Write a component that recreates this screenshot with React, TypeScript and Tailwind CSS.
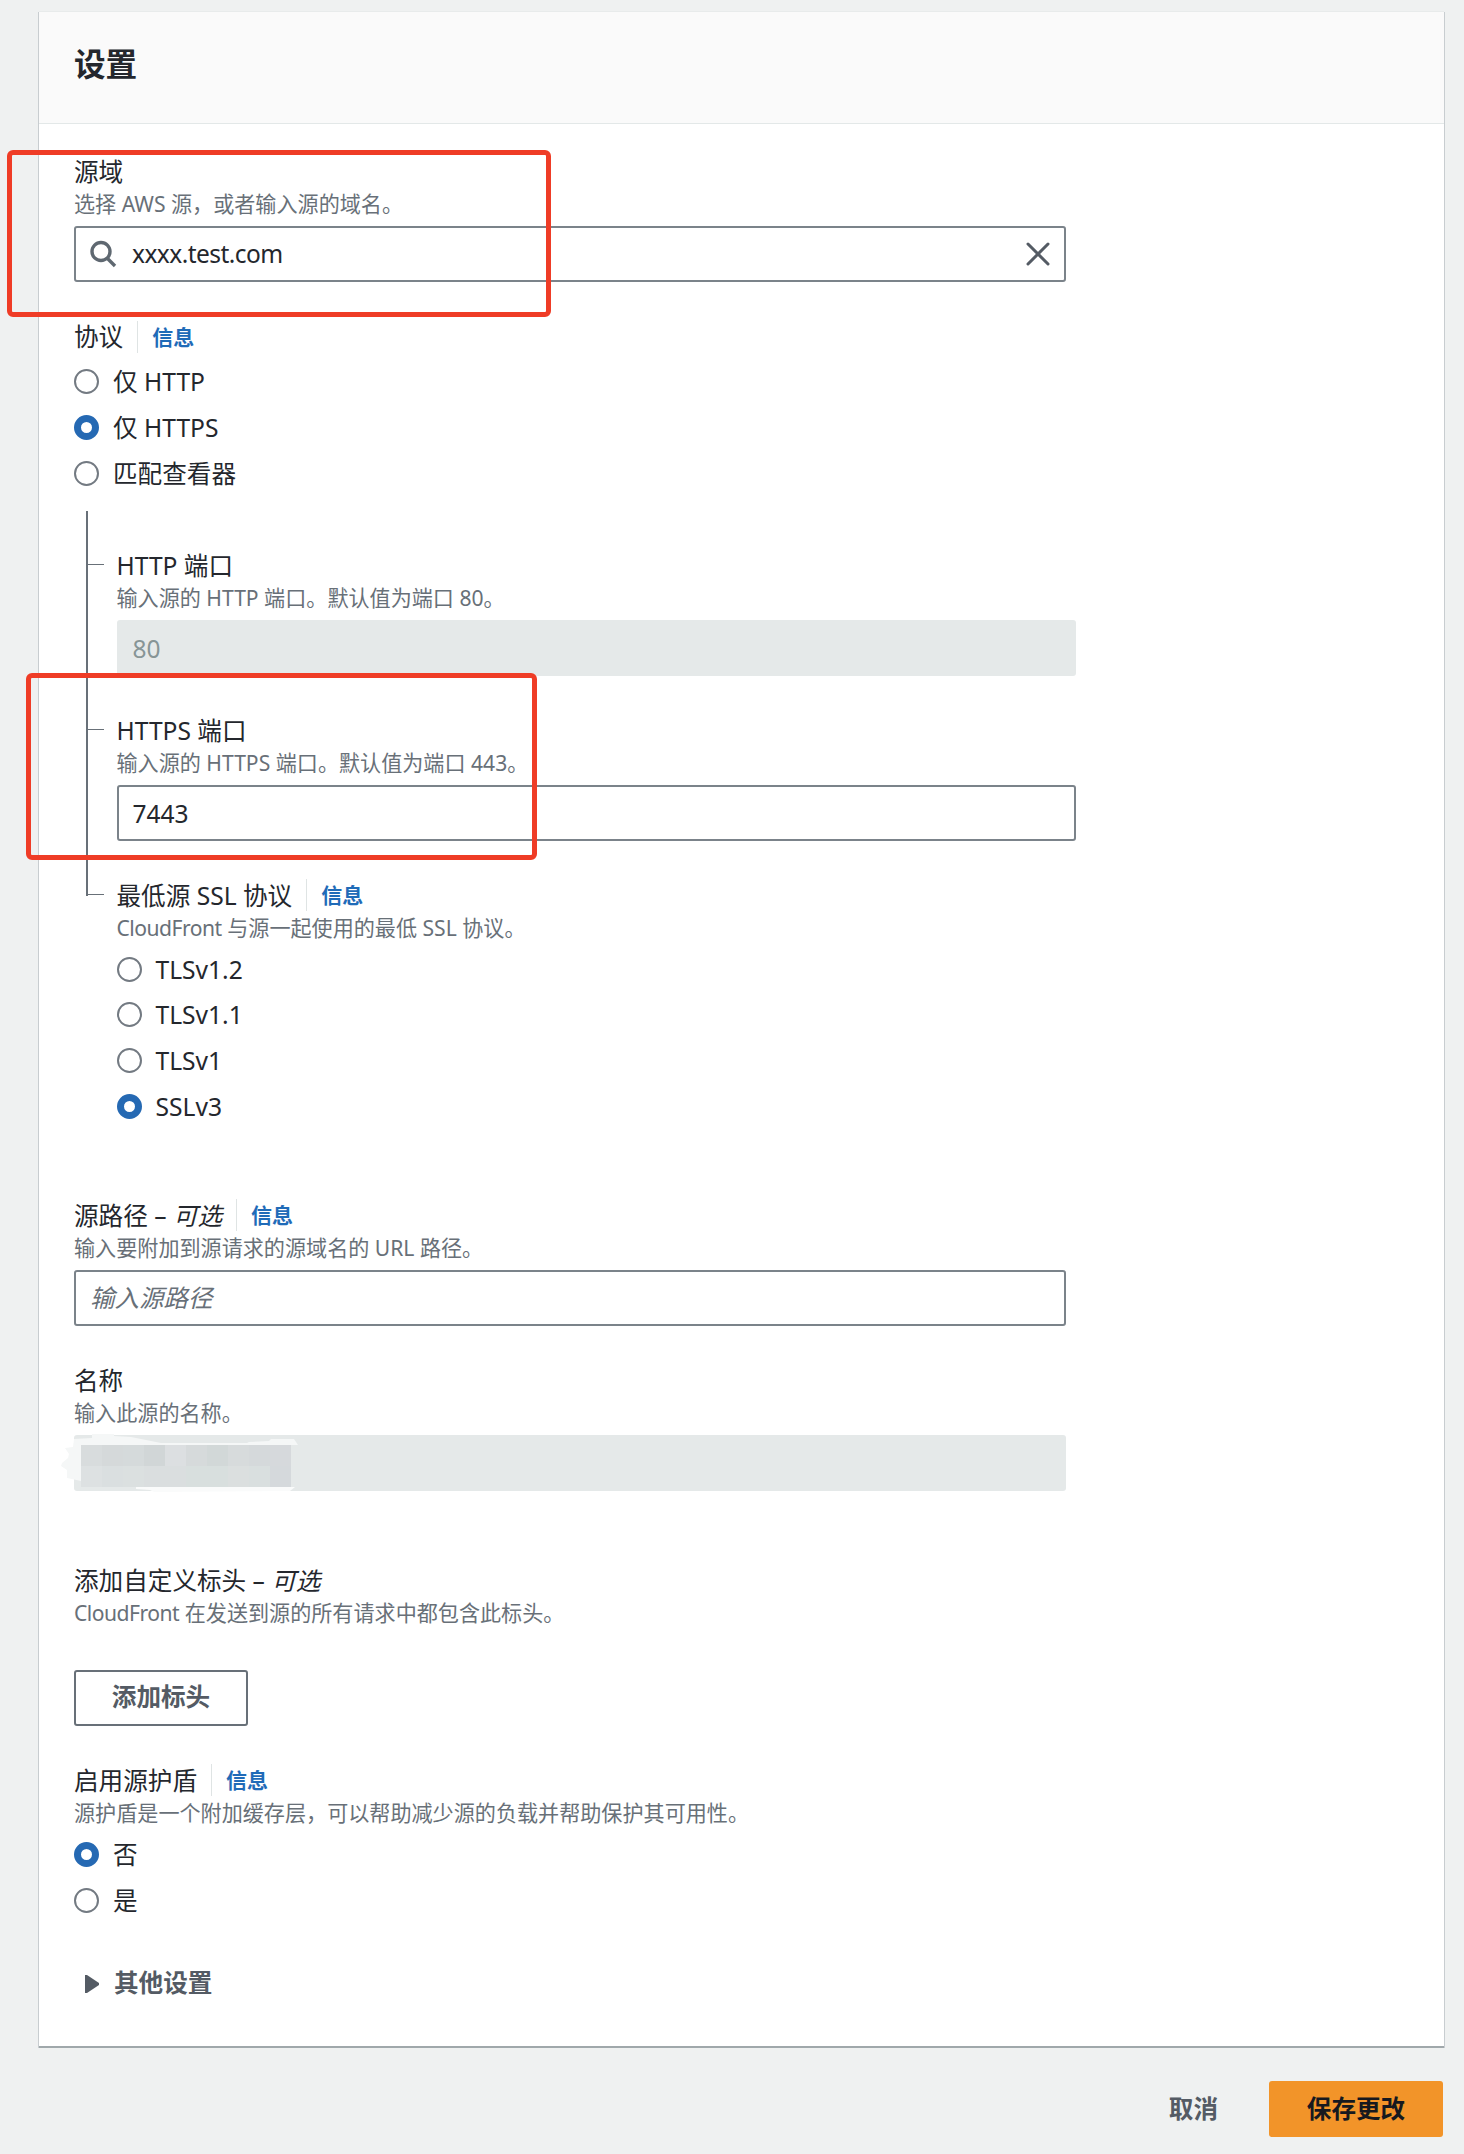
import type { ReactNode } from "react";

const LINK = "text-[21px] font-bold text-[#1f6bb8]";

function Label({ children, info }: { children: ReactNode; info?: boolean }) {
    return (
        <div className="flex h-[33px] items-center text-[24.6px] leading-[33px] whitespace-pre text-[#24272d]">
            <span>{children}</span>
            {info && (
                <a className={`ml-3.5 h-8 border-l border-[#dfe4e4] pl-3.5 leading-8 ${LINK}`}>信息</a>
            )}
        </div>
    );
}

function Hint({ children }: { children: ReactNode }) {
    return <p className="h-8 text-[21.1px] leading-8 whitespace-nowrap text-[#687078]">{children}</p>;
}

function Radio({ label, checked }: { label: string; checked?: boolean }) {
    return (
        <label className="flex h-[45.7px] items-center gap-3.5 text-[24.6px] text-[#24272d]">
            <span
                className={
                    checked
                        ? "size-[25px] rounded-full border-[7.5px] border-[#2569b3] bg-white"
                        : "size-[25px] rounded-full border-2 border-[#737a82] bg-white"
                }
            />
            <span className="leading-[33px]">{label}</span>
        </label>
    );
}

function Box({ children, disabled }: { children?: ReactNode; disabled?: boolean }) {
    return (
        <div
            className={
                disabled
                    ? "mt-1.5 flex h-14 items-center rounded-[3px] bg-[#e5e9e9] px-4 pt-0.5 text-[24.5px] text-[#879596]"
                    : "mt-1.5 flex h-14 items-center rounded-[3px] border-2 border-[#7b838a] bg-white px-3.5 text-[24.5px] text-[#24272d]"
            }
        >
            {children}
        </div>
    );
}

// Tick that joins a nested field to the vertical line
function Tick() {
    return <span className="absolute top-[15px] -left-[29px] h-[1.5px] w-4 bg-[#687078]" />;
}

const MOSAIC_TOP = ["#d8dcdd", "#d5d9da", "#d5dadb", "#d1d6d7", "#dcdfe1", "#d6dadb", "#d2d8d8", "#d7dbdc", "#d5d9db", "#d6d9dc"];
const MOSAIC_BOTTOM = ["#dde1e2", "#dadfe0", "#dbe0e0", "#dadedf", "#dadedf", "#d8dfde", "#d8dfde", "#dbdfdf", "#d9dfdf", "#d5d9dc"];

function Redaction() {
    return (
        <svg className="absolute -left-[15px] -top-1 overflow-visible" width="240" height="66" viewBox="0 0 240 66">
            <path
                d="M15 8 L33 7 L33 3 L55 3 L55 5 L72 6 L102 12 L188 12 L190 11 L210 10 L212 8 L235 8 L239 14 L22 14 L22 50 L8 47 L8 39 L2 35 L3 32 L9 27 L10 23 L6 17 L14 16 Z"
                fill="#f5f7f7"
            />
            <path d="M77 56 L236 56 L231 60 L95 61 L91 59 L77 58 Z" fill="#fafbfb" />
            {MOSAIC_TOP.map((c, i) => (
                <rect key={i} x={22 + i * 21} y="14" width="21" height="21" fill={c} />
            ))}
            {MOSAIC_BOTTOM.map((c, i) => (
                <rect key={i} x={22 + i * 21} y="35" width="21" height="21" fill={c} />
            ))}
        </svg>
    );
}

export default function App() {
    return (
        <div className="relative h-[2154px] w-[1464px] bg-[#eff1f1] pt-3 font-['Noto_Sans','Noto_Sans_CJK_SC',sans-serif]">
            <main className="ml-[39px] h-[2036px] w-[1405px] border-b-2 border-[#a0a8ab] bg-white shadow-[-1px_0_0_0_#c8cdd0,1px_0_0_0_#c8cdd0,0_-1px_0_0_#e8ebeb]">
                <header className="flex h-28 items-center border-b border-[#e3e8e8] bg-[#fafafa] pb-2 pl-[35px]">
                    <h1 className="text-[31.6px] leading-10 font-bold text-[#24272d]">设置</h1>
                </header>

                <div className="flex w-[1027px] flex-col pt-[31px] pl-[35px]">
                    <section>
                        <Label>源域</Label>
                        <Hint>选择 AWS 源，或者输入源的域名。</Hint>
                        <Box>
                            <svg className="mr-[15px] -ml-px" width="28" height="28" viewBox="0 0 28 28" fill="none" stroke="#5f6871" strokeWidth="3.4">
                                <circle cx="12" cy="11.5" r="9" />
                                <path d="M18.5 18.5 L26 26" />
                            </svg>
                            <span className="flex-1 tracking-[-0.55px]">xxxx.test.com</span>
                            <svg width="24" height="24" viewBox="0 0 24 24" stroke="#545b64" strokeWidth="3" strokeLinecap="round">
                                <path d="M2 2 L22 22 M22 2 L2 22" />
                            </svg>
                        </Box>
                    </section>

                    <section className="mt-[38px]">
                        <Label info>协议</Label>
                        <div className="pt-1.5">
                            <Radio label="仅 HTTP" />
                            <Radio label="仅 HTTPS" checked />
                            <Radio label="匹配查看器" />
                        </div>
                    </section>

                    <div className="mt-[14.9px] flex w-[1002px]">
                        <div className="ml-3 h-[385px] w-[1.5px] shrink-0 bg-[#687078]" />
                        <div className="ml-[29px] flex flex-1 flex-col gap-[38px] pt-[38px]">
                            <section className="relative">
                                <Tick />
                                <Label>HTTP 端口</Label>
                                <Hint>输入源的 HTTP 端口。默认值为端口 80。</Hint>
                                <Box disabled>80</Box>
                            </section>
                            <section className="relative">
                                <Tick />
                                <Label>HTTPS 端口</Label>
                                <Hint>输入源的 HTTPS 端口。默认值为端口 443。</Hint>
                                <Box>
                                    <span className="pt-0.5">7443</span>
                                </Box>
                            </section>
                            <section className="relative">
                                <Tick />
                                <Label info>最低源 SSL 协议</Label>
                                <Hint>
                                    <span className="tracking-[-0.5px]">CloudFront</span> 与源一起使用的最低 SSL 协议。
                                </Hint>
                                <div className="pt-[2.5px]">
                                    <Radio label="TLSv1.2" />
                                    <Radio label="TLSv1.1" />
                                    <Radio label="TLSv1" />
                                    <Radio label="SSLv3" checked />
                                </div>
                            </section>
                        </div>
                    </div>

                    <section className="mt-[69.7px]">
                        <Label info>
                            源路径 – <i>可选</i>
                        </Label>
                        <Hint>输入要附加到源请求的源域名的 URL 路径。</Hint>
                        <Box>
                            <span className="text-[#687078] italic">输入源路径</span>
                        </Box>
                    </section>

                    <section className="mt-[38px]">
                        <Label>名称</Label>
                        <Hint>输入此源的名称。</Hint>
                        <div className="relative">
                            <Box disabled />
                            <Redaction />
                        </div>
                    </section>

                    <section className="mt-[73px]">
                        <Label>
                            添加自定义标头 – <i>可选</i>
                        </Label>
                        <Hint>
                            <span className="tracking-[-0.5px]">CloudFront</span> 在发送到源的所有请求中都包含此标头。
                        </Hint>
                        <button className="mt-[41px] block h-14 w-[174px] rounded-[3px] border-2 border-[#687078] text-[24.6px] font-bold text-[#545b64]">
                            添加标头
                        </button>
                    </section>

                    <section className="mt-[38px]">
                        <Label info>启用源护盾</Label>
                        <Hint>源护盾是一个附加缓存层，可以帮助减少源的负载并帮助保护其可用性。</Hint>
                        <div className="pt-[3px]">
                            <Radio label="否" checked />
                            <Radio label="是" />
                        </div>
                    </section>

                    <div className="mt-11 flex h-[33px] items-center pl-2.5 text-[24.6px] font-bold text-[#545b64]">
                        <svg className="mr-3.5" width="16" height="18" viewBox="0 0 16 18" fill="#545b64">
                            <path d="M1 0 L3 0 L15 8 L15 10 L3 18 L1 18 Z" />
                        </svg>
                        其他设置
                    </div>
                </div>
            </main>

            <footer className="mt-[33px] mr-[21px] flex items-center justify-end gap-[51px] text-[24.6px] font-bold">
                <button className="text-[#545b64]">取消</button>
                <button className="h-14 w-[174px] rounded-[3px] bg-[#f29429] text-[#16191f]">保存更改</button>
            </footer>

            {/* highlight frames drawn over the form */}
            <div className="absolute top-[150px] left-[7px] h-[167px] w-[544px] rounded-md border-[5px] border-[#ef3c26]" />
            <div className="absolute top-[673px] left-[26px] h-[187px] w-[511px] rounded-md border-[5px] border-[#ef3c26]" />
        </div>
    );
}
